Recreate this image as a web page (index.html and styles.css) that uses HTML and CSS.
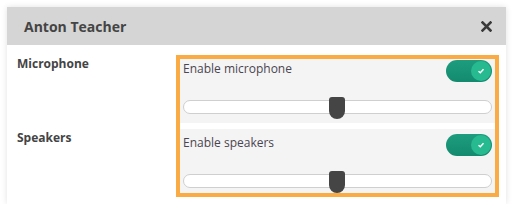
FILE: index.html
```html
<!DOCTYPE html>
<html>
<head>
<meta charset="utf-8">
<link rel="stylesheet" href="styles.css">
</head>
<body>
<div class="card">
  <div class="header">
    <span class="title">Anton Teacher</span>
    <svg class="close" width="11" height="11" viewBox="0 0 11 11"><path d="M1.5 1.5 L9.5 9.5 M9.5 1.5 L1.5 9.5" stroke="#3a3a3a" stroke-width="2.6" stroke-linecap="square"/></svg>
  </div>
  <div class="body">
    <div class="labels">
      <div class="label mic-label">Microphone</div>
      <div class="label spk-label">Speakers</div>
    </div>
    <div class="panel">
      <div class="section mic">
        <div class="row">
          <span class="text">Enable microphone</span>
          <span class="toggle"><span class="knob"><svg width="8" height="8" viewBox="0 0 8 8"><path d="M1.5 4.2 L3.3 5.8 L6.5 2.3" fill="none" stroke="#fff" stroke-width="1.4"/></svg></span></span>
        </div>
        <div class="slider"><span class="track"></span><span class="thumb"></span></div>
      </div>
      <div class="section spk">
        <div class="row">
          <span class="text">Enable speakers</span>
          <span class="toggle"><span class="knob"><svg width="8" height="8" viewBox="0 0 8 8"><path d="M1.5 4.2 L3.3 5.8 L6.5 2.3" fill="none" stroke="#fff" stroke-width="1.4"/></svg></span></span>
        </div>
        <div class="slider"><span class="track"></span><span class="thumb"></span></div>
      </div>
    </div>
  </div>
</div>
</body>
</html>
```
FILE: styles.css
```css
* { box-sizing: border-box; }
html, body { margin: 0; padding: 0; background: #fff; }
body { padding: 7px 8px 0 7px; font-family: "Open Sans", "Noto Sans", sans-serif; color: #444; }
.card {
  width: 499px;
  height: 197px;
  background: #fff;
  box-shadow: 0 0 6px rgba(0,0,0,0.12);
}
.header {
  height: 38px;
  background: #d5d5d5;
  display: flex;
  align-items: center;
  justify-content: space-between;
  padding: 0 14px 0 17px;
}
.title { font-weight: 700; font-size: 14px; color: #444; }
.close { display: block; }
.body {
  display: flex;
  padding: 10px 7px 0 10px;
}
.labels { width: 159px; }
.label { font-weight: 700; font-size: 12px; color: #444; line-height: 18px; }
.mic-label { margin-top: 0px; }
.spk-label { margin-top: 56px; }
.panel {
  width: 323px;
  border: 4px solid #fbab43;
  background: #fff;
  display: flex;
  flex-direction: column;
  gap: 6px;
}
.section { background: #f4f4f4; padding: 0 3px; height: 64px; }
.mic { padding-top: 1px; }
.spk { padding-top: 5px; }
.row { display: flex; justify-content: space-between; align-items: flex-start; height: 22px; }
.text { font-size: 12px; line-height: 18px; color: #4a4550; }
.toggle {
  width: 46px; height: 22px; border-radius: 11px;
  background: linear-gradient(#1d9d7e, #138a6e);
  display: flex; justify-content: flex-end; align-items: center;
  padding-right: 1px;
}
.knob {
  width: 20px; height: 20px; border-radius: 50%;
  background: #27b98f;
  display: flex; justify-content: center; align-items: center;
}
.knob svg { display: block; }
.slider { position: relative; margin-top: 18px; height: 14px; }
.track {
  display: block; width: 309px; height: 14px; border-radius: 7px;
  background: #fff; border: 1px solid #cfcfcf;
}
.thumb {
  position: absolute; left: 146px; top: -3px;
  width: 16px; height: 22px;
  background: #454545;
  border-radius: 3px 3px 8px 8px;
}
```
